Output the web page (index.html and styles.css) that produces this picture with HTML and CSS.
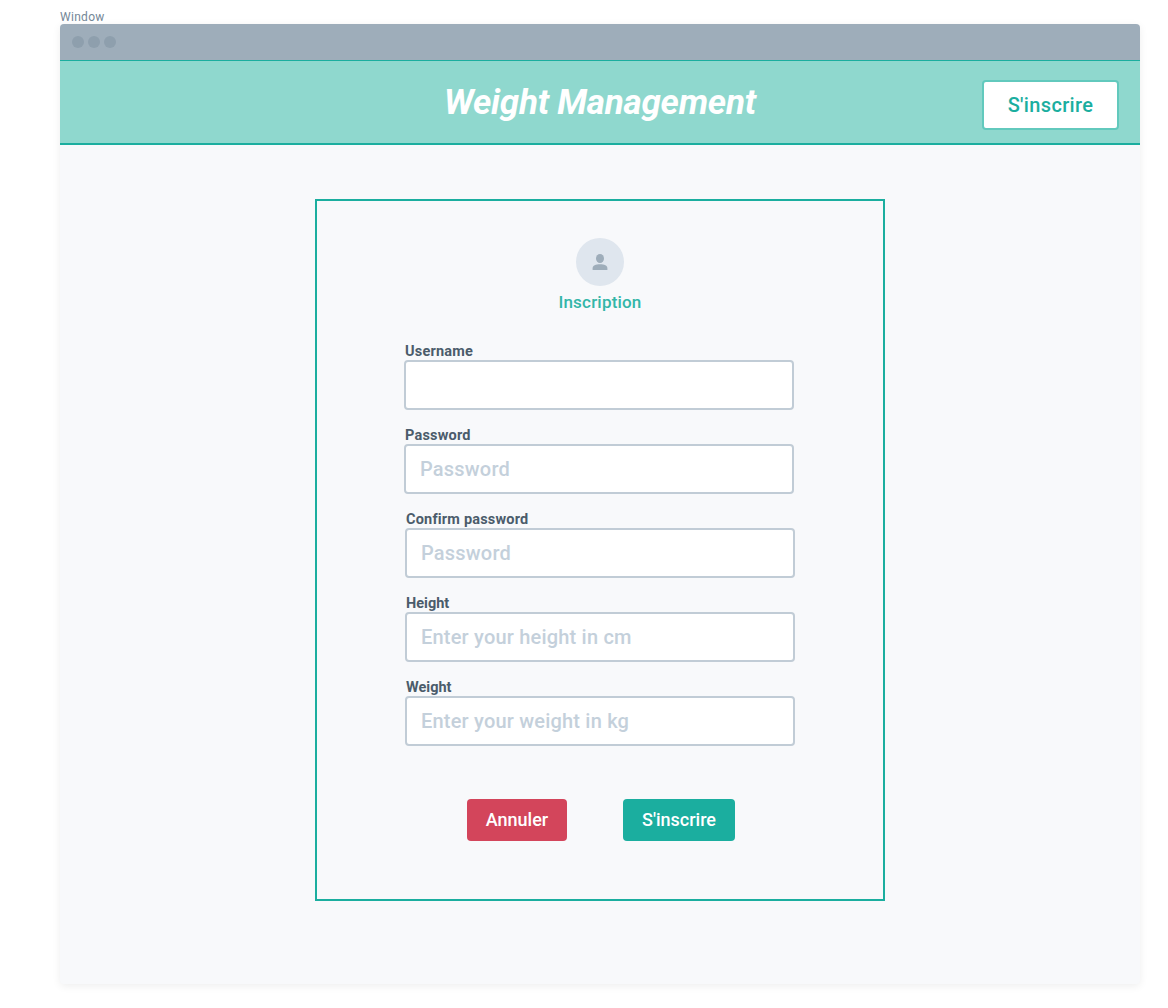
FILE: index.html
```html
<!DOCTYPE html>
<html lang="fr">
<head>
<meta charset="utf-8">
<title>Weight Management</title>
<link rel="stylesheet" href="styles.css">
</head>
<body>
<div class="window-label">Window</div>
<div class="window">
  <div class="titlebar"><span class="dot"></span><span class="dot"></span><span class="dot"></span></div>
  <header class="header">
    <h1 class="title">Weight Management</h1>
    <button class="signup" type="button">S'inscrire</button>
  </header>
  <main class="content">
    <form class="card">
      <div class="avatar">
        <svg width="16" height="18" viewBox="0 0 16 18"><ellipse cx="8" cy="5.500" rx="4" ry="4.500"/><path d="M.6 17v-1.600C.6 12.600 3.600 11.300 8 11.300s7.400 1.300 7.400 4.100V17z"/></svg>
      </div>
      <h2 class="subtitle">Inscription</h2>
      <div class="fields">
        <div class="field"><label class="label" for="username">Username</label><input class="input" id="username" type="text"></div>
        <div class="field"><label class="label" for="password">Password</label><input class="input" id="password" type="password" placeholder="Password"></div>
        <div class="field shifted"><label class="label" for="confirm">Confirm password</label><input class="input" id="confirm" type="password" placeholder="Password"></div>
        <div class="field shifted"><label class="label tight" for="height">Height</label><input class="input" id="height" type="text" placeholder="Enter your height in cm"></div>
        <div class="field shifted"><label class="label tight" for="weight">Weight</label><input class="input" id="weight" type="text" placeholder="Enter your weight in kg"></div>
      </div>
      <div class="actions">
        <button class="button cancel" type="button">Annuler</button>
        <button class="button submit" type="button">S'inscrire</button>
      </div>
    </form>
  </main>
</div>
</body>
</html>
```
FILE: styles.css
```css
* { box-sizing: border-box; }
body {
  margin: 0;
  padding: 9px 28px 24px 60px;
  height: 1008px;
  background: #fff;
  font-family: Roboto, "Liberation Sans", sans-serif;
}
button, input { font-family: inherit; }
.window-label {
  height: 15px;
  font-size: 12px;
  line-height: 17px;
  letter-spacing: 0.3px;
  color: #748797;
}
.window {
  height: 960px;
  background: #f8f9fb;
  border-radius: 4px;
  box-shadow: 0 2px 8px rgba(0, 0, 0, 0.07);
}
.titlebar {
  display: flex;
  align-items: center;
  gap: 4px;
  height: 36px;
  padding-left: 12px;
  background: #9eadba;
  border-radius: 4px 4px 0 0;
}
.dot {
  width: 12px;
  height: 12px;
  border-radius: 50%;
  background: #8e9fad;
}
.header {
  display: grid;
  grid-template-columns: 1fr auto 1fr;
  align-items: center;
  height: 85px;
  padding-right: 21px;
  padding-left: 21px;
  background: #8fd8ce;
  border-top: 1px solid #1bae9f;
  border-bottom: 2px solid #1bae9f;
}
.title {
  grid-column: 2;
  margin: 2px 0 0;
  font-size: 35px;
  line-height: 42px;
  font-weight: 700;
  font-style: italic;
  letter-spacing: -0.25px;
  color: #fff;
}
.signup {
  justify-self: end;
  width: 137px;
  height: 50px;
  margin-top: 5px;
  padding: 0;
  background: #fff;
  border: 2px solid #62c9bd;
  border-radius: 4px;
  font-size: 20px;
  font-weight: 500;
  letter-spacing: 0.35px;
  color: #1bae9f;
}
.content {
  display: flex;
  justify-content: center;
  padding-top: 54px;
}
.card {
  width: 570px;
  height: 702px;
  padding: 37px 87px 0;
  border: 2px solid #1bae9f;
}
.avatar {
  display: flex;
  align-items: center;
  justify-content: center;
  width: 48px;
  height: 48px;
  margin: 0 auto;
  border-radius: 50%;
  background: #dfe6ee;
}
.avatar svg { fill: #9eadba; }
.subtitle {
  margin: 5px 0 29px;
  text-align: center;
  font-size: 17px;
  line-height: 22px;
  font-weight: 500;
  letter-spacing: 0.2px;
  color: #33b6a8;
}
.fields {
  display: flex;
  flex-direction: column;
  gap: 16px;
}
.field {
  display: flex;
  flex-direction: column;
  width: 390px;
}
.shifted { margin-left: 1px; }
.label {
  height: 18px;
  padding-left: 1px;
  font-size: 14.5px;
  line-height: 20px;
  font-weight: 700;
  letter-spacing: 0.2px;
  color: #4b5c6b;
}
.tight { letter-spacing: 0; }
.input {
  width: 390px;
  height: 50px;
  padding: 0 14px;
  background: #fff;
  border: 2px solid #c1ccd6;
  border-radius: 4px;
  outline: none;
  font-size: 20px;
  font-weight: 500;
  letter-spacing: 0.2px;
}
.input::placeholder { color: #c4d0db; opacity: 1; }
.actions {
  display: flex;
  gap: 56px;
  margin: 53px 0 0 63px;
}
.button {
  height: 42px;
  padding: 0 0 2px;
  border: 0;
  border-radius: 4px;
  font-size: 18px;
  font-weight: 500;
  color: #fff;
}
.cancel { width: 100px; background: #d3455b; }
.submit { width: 112px; background: #1bae9f; }
```
